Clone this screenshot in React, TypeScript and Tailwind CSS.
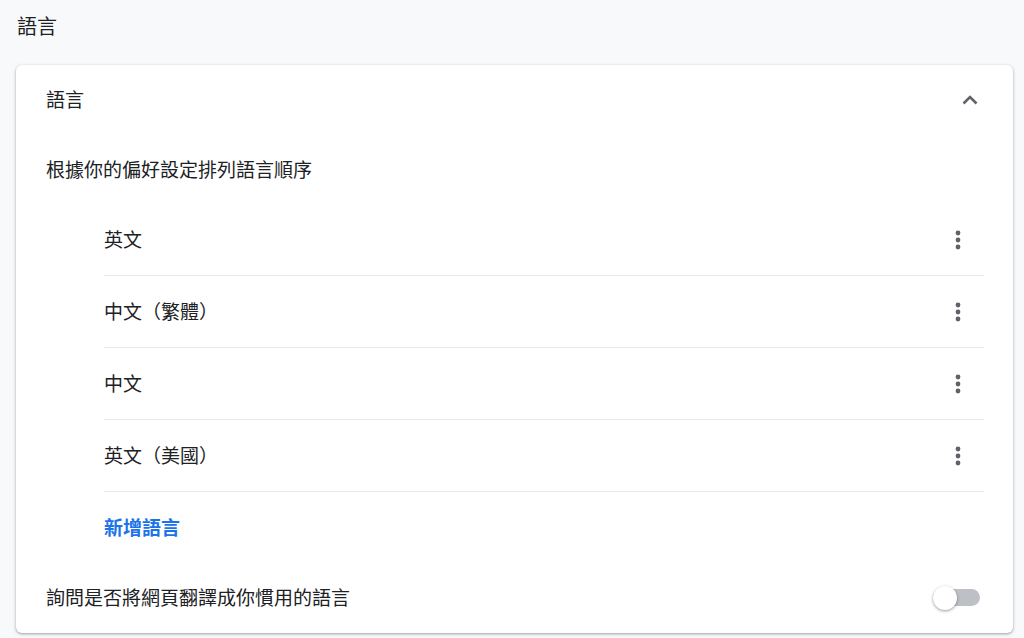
import React from "react";

const font = { fontFamily: '"Noto Sans CJK TC", "Noto Sans", sans-serif' };

function Kebab() {
  return (
    <div className="flex w-[40px] h-[40px] items-center justify-center">
      <svg width="6" height="20" viewBox="0 0 6 20">
        <circle cx="3" cy="3" r="2.4" fill="#5f6368" />
        <circle cx="3" cy="10" r="2.4" fill="#5f6368" />
        <circle cx="3" cy="17" r="2.4" fill="#5f6368" />
      </svg>
    </div>
  );
}

const langs = ["英文", "中文（繁體）", "中文", "英文（美國）"];

export default function App() {
  return (
    <div
      className="w-[1024px] h-[638px] overflow-hidden bg-[#f8f9fa] text-[#202124]"
      style={font}
    >
      <div className="pl-[17px] pt-[12px] text-[20px] leading-[28px]">語言</div>
      <div className="mt-[25px] ml-[16px] w-[997px] rounded-[6px] bg-white shadow-[0_1px_2px_rgba(60,64,67,0.3),0_1px_3px_1px_rgba(60,64,67,0.15)] pl-[30px] pr-[29px]">
        <div className="flex h-[68px] items-center justify-between">
          <span className="text-[19px]">語言</span>
          <div className="flex w-[28px] items-center justify-center">
            <svg width="16" height="11" viewBox="0 0 16 11">
              <path d="M1.5 9.5 L8 3 L14.5 9.5" fill="none" stroke="#5f6368" strokeWidth="2.6" />
            </svg>
          </div>
        </div>
        <div className="flex h-[71px] items-center pt-[2px] text-[19px]">
          根據你的偏好設定排列語言順序
        </div>
        <div className="pl-[58px]">
          {langs.map((l) => (
            <div
              key={l}
              className="flex h-[72px] items-center justify-between border-b border-[#e8eaed] pr-[6px]"
            >
              <span className="text-[19px]">{l}</span>
              <Kebab />
            </div>
          ))}
          <div className="flex h-[70px] items-center">
            <span className="text-[19px] font-bold text-[#1a73e8]">新增語言</span>
          </div>
        </div>
        <div className="flex h-[71px] items-center justify-between">
          <span className="text-[19px]">詢問是否將網頁翻譯成你慣用的語言</span>
          <div className="relative mr-[4px] h-[17px] w-[47px] rounded-full bg-[#bdc1c6]">
            <div className="absolute left-0 top-1/2 h-[24px] w-[24px] -translate-y-1/2 rounded-full bg-white shadow-[0_1px_3px_rgba(0,0,0,0.4)]" />
          </div>
        </div>
      </div>
    </div>
  );
}
